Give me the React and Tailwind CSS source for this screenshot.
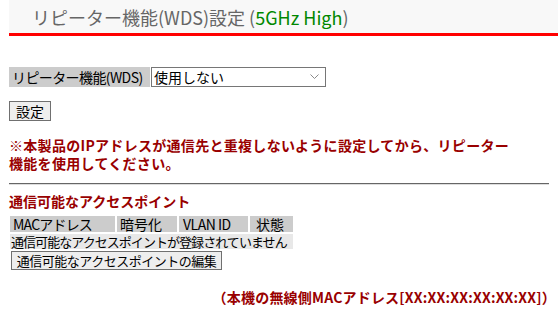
import React from 'react';

const red = 'text-[#990000]';

export default function App() {
  return (
    <div className="w-[558px] h-[312px] bg-white pl-[9px] font-['Noto_Sans_CJK_JP',sans-serif] text-[14px] text-black overflow-hidden">
      {/* Title */}
      <div className="h-[33px] bg-[#f8f8f8] flex items-center pl-[23px] text-[18px] leading-none text-[#666666] whitespace-nowrap">
        <span>リピーター機能(WDS)設定 (</span>
        <span className="text-[#008800]">5GHz High</span>
        <span>)</span>
      </div>
      <div className="h-[3px] bg-[#ff0000]" />

      {/* Repeater select */}
      <div className="mt-[31px] flex items-center h-[20px]">
        <div className="h-[20px] w-[141px] bg-[#cccccc] flex items-center pl-[3px] leading-none whitespace-nowrap tracking-[-0.6px]">
          リピーター機能(WDS)
        </div>
        <div className="ml-[1px] h-[20px] w-[175px] border border-[#767676] bg-white flex items-center justify-between pl-[2px] pr-[6px] leading-none whitespace-nowrap">
          <span>使用しない</span>
          <svg width="9" height="6" viewBox="0 0 9 6" fill="none">
            <path d="M0.5 0.5 L4.5 4.5 L8.5 0.5" stroke="#8a8a8a" strokeWidth="1" />
          </svg>
        </div>
      </div>

      <button className="mt-[14px] block h-[20px] w-[42px] border border-[#707070] bg-[#eeeeee] text-[14px] leading-none">
        設定
      </button>

      {/* Warning */}
      <p className={`mt-[15px] font-bold ${red} leading-[18px] text-[14px] whitespace-nowrap tracking-[0.3px]`}>
        ※本製品のIPアドレスが通信先と重複しないように設定してから、リピーター<br />
        機能を使用してください。
      </p>

      <div className="mt-[11px] mr-[9px] h-[2px] bg-[#666666] border-b border-[#dddddd]" />

      {/* Access points */}
      <h3 className={`mt-[8px] font-bold ${red} text-[14px] leading-[17px] whitespace-nowrap`}>通信可能なアクセスポイント</h3>

      <table className="mt-[4px] border-separate border-spacing-[2px] -ml-[1px] leading-[14px] table-fixed whitespace-nowrap">
        <thead>
          <tr className="bg-[#cccccc]">
            <th className="w-[105px] h-[16px] font-normal text-left pl-[3px] tracking-[-0.8px]">MACアドレス</th>
            <th className="w-[60px] font-normal text-left pl-[3px]">暗号化</th>
            <th className="w-[69px] font-normal text-left pl-[4px] tracking-[-0.5px]">VLAN ID</th>
            <th className="w-[43px] font-normal text-left pl-[6px]">状態</th>
          </tr>
        </thead>
        <tbody>
          <tr className="bg-[#e8e8e8]">
            <td colSpan={4} className="h-[15px] pl-[1px] text-[13px] tracking-[-0.95px]">通信可能なアクセスポイントが登録されていません</td>
          </tr>
        </tbody>
      </table>

      <button className="ml-[2px] block h-[19px] w-[211px] border border-[#707070] bg-[#eeeeee] text-[13px] leading-none whitespace-nowrap tracking-[-0.5px]">
        通信可能なアクセスポイントの編集
      </button>

      <p className={`mt-[19px] mr-[2px] text-right font-bold ${red} text-[14px] leading-[17px] whitespace-nowrap tracking-[0.2px]`}>
        （本機の無線側MACアドレス[XX:XX:XX:XX:XX:XX]）
      </p>
    </div>
  );
}
